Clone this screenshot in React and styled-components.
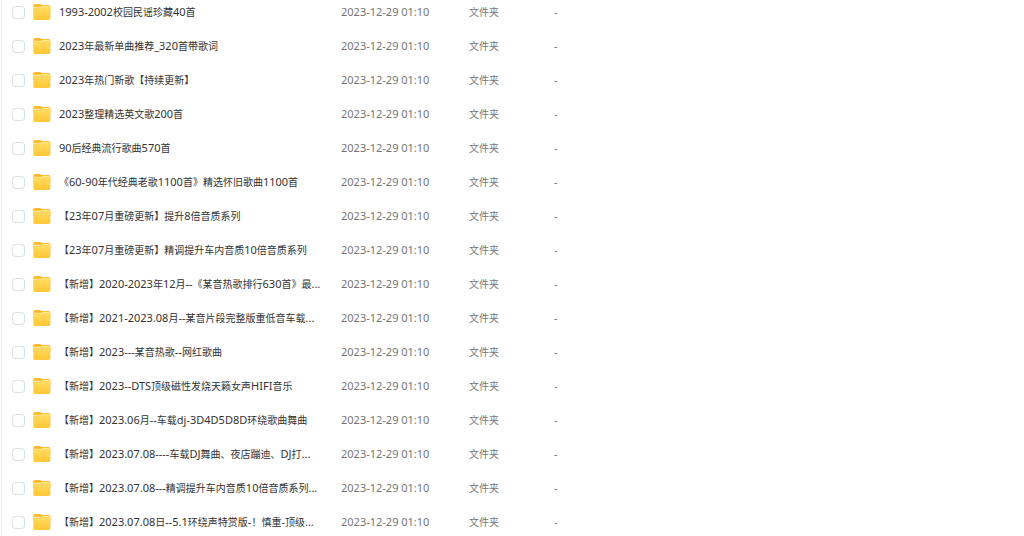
import React from "react";
import styled, { createGlobalStyle } from "styled-components";

const archivos = [
  "1993-2002校园民谣珍藏40首",
  "2023年最新单曲推荐_320首带歌词",
  "2023年热门新歌【持续更新】",
  "2023整理精选英文歌200首",
  "90后经典流行歌曲570首",
  "《60-90年代经典老歌1100首》精选怀旧歌曲1100首",
  "【23年07月重磅更新】提升8倍音质系列",
  "【23年07月重磅更新】精调提升车内音质10倍音质系列",
  "【新增】2020-2023年12月--《某音热歌排行630首》最...",
  "【新增】2021-2023.08月--某音片段完整版重低音车载...",
  "【新增】2023---某音热歌--网红歌曲",
  "【新增】2023--DTS顶级磁性发烧天籁女声HIFI音乐",
  "【新增】2023.06月--车载dj-3D4D5D8D环绕歌曲舞曲",
  "【新增】2023.07.08----车载DJ舞曲、夜店蹦迪、DJ打...",
  "【新增】2023.07.08---精调提升车内音质10倍音质系列...",
  "【新增】2023.07.08日--5.1环绕声特赏版-！慎重-顶级...",
].map((nombre, index) => ({
  id: `archivo-${index}`,
  nombre,
  fecha: "2023-12-29 01:10",
  tipo: "文件夹",
  peso: "-",
}));

// latin runs are set one size larger than the chinese ones
function Texto({ children }) {
  return children
    .split(/([\x20-\x7e]+)/)
    .filter(Boolean)
    .map((parte, index) =>
      /^[\x20-\x7e]/.test(parte) ? <Latin key={index}>{parte}</Latin> : parte
    );
}

function IconoCarpeta() {
  return (
    <Icono viewBox="0 0 18 18" aria-hidden="true">
      <defs>
        <linearGradient id="carpeta" x1="0" y1="0" x2="0" y2="1">
          <stop offset="0" stopColor="#ffdc66" />
          <stop offset="1" stopColor="#ffc834" />
        </linearGradient>
      </defs>
      <path
        d="M0.3 2.6Q0.3 1 1.9 1H6.8Q7.6 1 8.1 1.5L8.7 2H15.8Q17.4 2 17.4 3.6V9H0.3Z"
        fill="#fdb92b"
      />
      <path
        d="M0.3 5Q0.3 3.7 1.6 3.7H7.4Q8 3.7 8.4 3.4L8.9 3.1Q9.2 2.9 9.7 2.9H16.1Q17.4 2.9 17.4 4.2V15.2Q17.4 16.8 15.8 16.8H1.9Q0.3 16.8 0.3 15.2Z"
        fill="url(#carpeta)"
      />
      <path
        d="M1 4.4H7.6Q8.3 4.4 8.8 4L9.5 3.5H16.5"
        fill="none"
        stroke="#ffe99e"
        strokeWidth="0.8"
      />
      <path d="M1.5 16.4H16.2" stroke="#fdbd2c" strokeWidth="0.7" />
    </Icono>
  );
}

export default function App() {
  return (
    <>
      <GlobalStyle />
      <Container>
        <Tabla>
          <colgroup>
            <col width="31" />
            <col width="26" />
            <col width="282" />
            <col width="128" />
            <col width="85" />
            <col />
          </colgroup>
          <tbody>
            {archivos.map((item) => (
              <Fila key={item.id}>
                <Celda $inicio>
                  <Check type="checkbox" id={item.id} />
                </Celda>
                <Celda>
                  <IconoCarpeta />
                </Celda>
                <Celda>
                  <Nombre htmlFor={item.id}>
                    <Texto>{item.nombre}</Texto>
                  </Nombre>
                </Celda>
                <Celda>
                  <Texto>{item.fecha}</Texto>
                </Celda>
                <Celda>{item.tipo}</Celda>
                <Celda>
                  <Texto>{item.peso}</Texto>
                </Celda>
              </Fila>
            ))}
          </tbody>
        </Tabla>
      </Container>
    </>
  );
}

const GlobalStyle = createGlobalStyle`
  body {
    margin: 0;
    background: #fff;
    overflow: hidden;
    font-family: "Noto Sans", "Noto Sans CJK SC", sans-serif;
  }
`;

const Container = styled.main`
  margin: -5px 0 0 1px;
  border-left: 1px solid #f1f2f4;
`;

const Tabla = styled.table`
  width: 100%;
  table-layout: fixed;
  border-collapse: collapse;
`;

const Fila = styled.tr`
  height: 34px;
`;

const Celda = styled.td`
  padding: 0 0 0 ${(props) => (props.$inicio ? "10px" : "0")};
  vertical-align: middle;
  font-size: 10px;
  line-height: 16px;
  color: #757575;
  white-space: nowrap;
`;

const Latin = styled.span`
  font-size: 11px;
`;

const Nombre = styled.label`
  display: block;
  color: #333;
  cursor: pointer;
`;

const Check = styled.input`
  appearance: none;
  display: block;
  box-sizing: border-box;
  width: 13px;
  height: 13px;
  margin: 0;
  border: 1px solid #dfe1e5;
  border-right-color: #cfe0f0;
  border-radius: 4px;
  background: #fff;

  &:checked {
    background: #06a7ff;
  }
`;

const Icono = styled.svg`
  display: block;
  width: 18px;
  height: 18px;
`;
